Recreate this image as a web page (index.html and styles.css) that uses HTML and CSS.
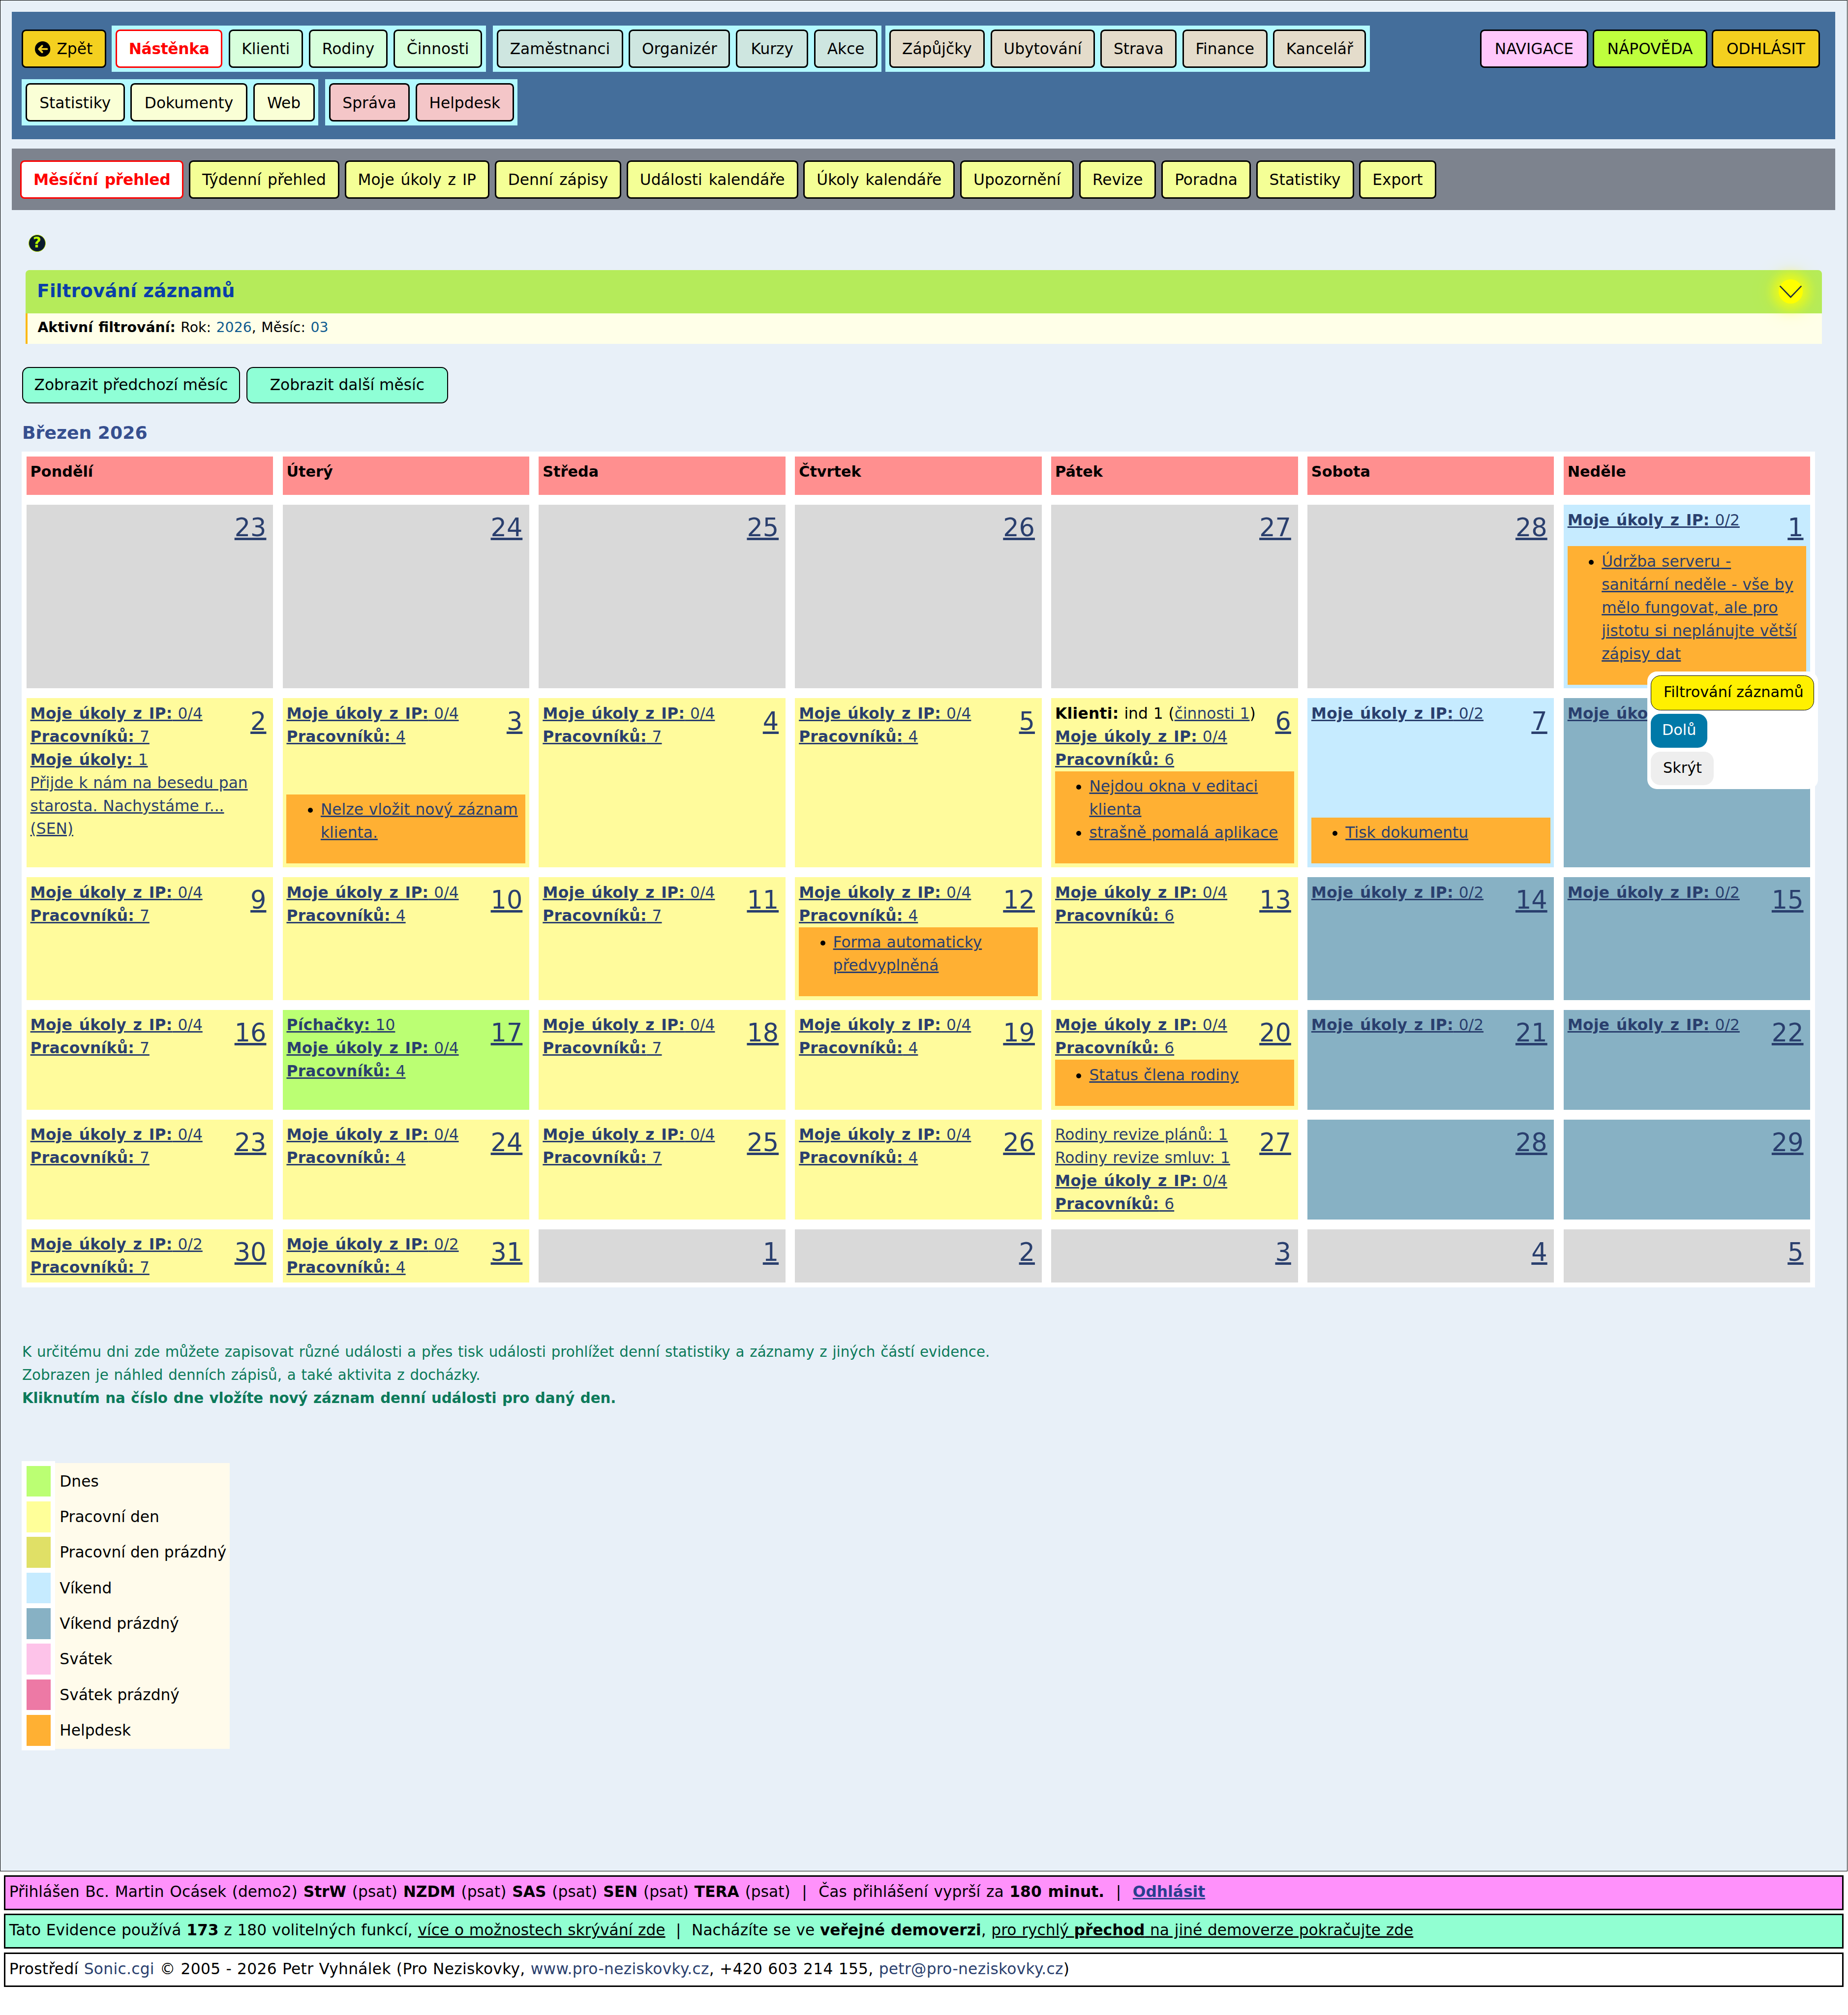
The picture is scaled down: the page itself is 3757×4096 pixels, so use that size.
FILE: index.html
```html
<!DOCTYPE html>
<html lang="cs">
<head>
<meta charset="utf-8">
<title>Měsíční přehled</title>
<link rel="stylesheet" href="styles.css">
</head>
<body>
<div class="frame">
  <nav class="nav">
    <div class="nav-left">
      <div class="nav-row">
        <a class="btn b-gold btn-back"><svg class="back-ico" viewBox="0 0 32 32"><circle cx="16" cy="16" r="16" fill="#000"/><path d="M25 16H9M15 9.5 8.5 16l6.5 6.5" fill="none" stroke="#f4d01f" stroke-width="4" stroke-linecap="round" stroke-linejoin="round"/></svg>Zpět</a>
        <div class="group g-a">
          <a class="btn active">Nástěnka</a><a class="btn b-mint">Klienti</a><a class="btn b-mint">Rodiny</a><a class="btn b-mint">Činnosti</a>
        </div>
        <div class="group g-b">
          <a class="btn b-teal">Zaměstnanci</a><a class="btn b-teal">Organizér</a><a class="btn b-teal b-wide">Kurzy</a><a class="btn b-teal">Akce</a>
        </div>
        <div class="group g-c">
          <a class="btn b-sand">Zápůjčky</a><a class="btn b-sand">Ubytování</a><a class="btn b-sand">Strava</a><a class="btn b-sand">Finance</a><a class="btn b-sand">Kancelář</a>
        </div>
      </div>
      <div class="nav-row">
        <div class="group g-d">
          <a class="btn b-cream">Statistiky</a><a class="btn b-cream">Dokumenty</a><a class="btn b-cream">Web</a>
        </div>
        <div class="group g-e">
          <a class="btn b-rose">Správa</a><a class="btn b-rose">Helpdesk</a>
        </div>
      </div>
    </div>
    <div class="nav-right">
      <a class="btn b-pink">NAVIGACE</a><a class="btn b-lime">NÁPOVĚDA</a><a class="btn b-gold">ODHLÁSIT</a>
    </div>
  </nav>

  <nav class="subnav">
    <a class="btn active">Měsíční přehled</a><a class="btn b-yel">Týdenní přehled</a><a class="btn b-yel">Moje úkoly z IP</a><a class="btn b-yel">Denní zápisy</a><a class="btn b-yel">Události kalendáře</a><a class="btn b-yel">Úkoly kalendáře</a><a class="btn b-yel">Upozornění</a><a class="btn b-yel">Revize</a><a class="btn b-yel">Poradna</a><a class="btn b-yel">Statistiky</a><a class="btn b-yel">Export</a>
  </nav>

  <div class="help-ico">?</div>

  <section class="filter">
    <div class="filter-head">
      <h2 class="filter-title">Filtrování záznamů</h2>
      <span class="chev"><svg viewBox="0 0 56 32" class="chev-svg"><path d="M3 3 28 29 53 3" fill="none" stroke="#1f2d3d" stroke-width="3"/></svg></span>
    </div>
    <div class="filter-body"><b>Aktivní filtrování:</b> Rok: <a class="flink">2026</a>, Měsíc: <a class="flink">03</a></div>
  </section>

  <div class="months">
    <a class="mbtn">Zobrazit předchozí měsíc</a><a class="mbtn mbtn-wide">Zobrazit další měsíc</a>
  </div>

  <h1 class="title">Březen 2026</h1>

  <div class="cal">
    <div class="hd">Pondělí</div><div class="hd">Úterý</div><div class="hd">Středa</div><div class="hd">Čtvrtek</div><div class="hd">Pátek</div><div class="hd">Sobota</div><div class="hd">Neděle</div>

    <div class="cell grey"><div class="txt"><a class="num">23</a></div></div>
    <div class="cell grey"><div class="txt"><a class="num">24</a></div></div>
    <div class="cell grey"><div class="txt"><a class="num">25</a></div></div>
    <div class="cell grey"><div class="txt"><a class="num">26</a></div></div>
    <div class="cell grey"><div class="txt"><a class="num">27</a></div></div>
    <div class="cell grey"><div class="txt"><a class="num">28</a></div></div>
    <div class="cell wkd"><div class="txt"><a class="num">1</a><a class="ln"><b>Moje úkoly z IP:</b> 0/2</a></div>
      <ul class="hlp"><li><a>Údržba serveru - sanitární neděle - vše by mělo fungovat, ale pro jistotu si neplánujte větší zápisy dat</a></li></ul></div>

    <div class="cell work"><div class="txt"><a class="num">2</a><a class="ln"><b>Moje úkoly z IP:</b> 0/4</a><a class="ln"><b>Pracovníků:</b> 7</a><a class="ln"><b>Moje úkoly:</b> 1</a><a class="ln">Přijde k nám na besedu pan</a><a class="ln">starosta. Nachystáme r...</a><a class="ln">(SEN)</a></div></div>
    <div class="cell work"><div class="txt"><a class="num">3</a><a class="ln"><b>Moje úkoly z IP:</b> 0/4</a><a class="ln"><b>Pracovníků:</b> 4</a></div>
      <ul class="hlp"><li><a>Nelze vložit nový záznam klienta.</a></li></ul></div>
    <div class="cell work"><div class="txt"><a class="num">4</a><a class="ln"><b>Moje úkoly z IP:</b> 0/4</a><a class="ln"><b>Pracovníků:</b> 7</a></div></div>
    <div class="cell work"><div class="txt"><a class="num">5</a><a class="ln"><b>Moje úkoly z IP:</b> 0/4</a><a class="ln"><b>Pracovníků:</b> 4</a></div></div>
    <div class="cell work"><div class="txt"><a class="num">6</a><span class="ln plain"><b>Klienti:</b> ind 1 (<a>činnosti 1</a>)</span><a class="ln"><b>Moje úkoly z IP:</b> 0/4</a><a class="ln"><b>Pracovníků:</b> 6</a></div>
      <ul class="hlp"><li><a>Nejdou okna v editaci klienta</a></li><li><a>strašně pomalá aplikace</a></li></ul></div>
    <div class="cell wkd"><div class="txt"><a class="num">7</a><a class="ln"><b>Moje úkoly z IP:</b> 0/2</a></div>
      <ul class="hlp"><li><a>Tisk dokumentu</a></li></ul></div>
    <div class="cell wke"><div class="txt"><a class="num">8</a><a class="ln"><b>Moje úkoly z IP:</b> 0/2</a></div></div>

    <div class="cell work"><div class="txt"><a class="num">9</a><a class="ln"><b>Moje úkoly z IP:</b> 0/4</a><a class="ln"><b>Pracovníků:</b> 7</a></div></div>
    <div class="cell work"><div class="txt"><a class="num">10</a><a class="ln"><b>Moje úkoly z IP:</b> 0/4</a><a class="ln"><b>Pracovníků:</b> 4</a></div></div>
    <div class="cell work"><div class="txt"><a class="num">11</a><a class="ln"><b>Moje úkoly z IP:</b> 0/4</a><a class="ln"><b>Pracovníků:</b> 7</a></div></div>
    <div class="cell work"><div class="txt"><a class="num">12</a><a class="ln"><b>Moje úkoly z IP:</b> 0/4</a><a class="ln"><b>Pracovníků:</b> 4</a></div>
      <ul class="hlp"><li><a>Forma automaticky předvyplněná</a></li></ul></div>
    <div class="cell work"><div class="txt"><a class="num">13</a><a class="ln"><b>Moje úkoly z IP:</b> 0/4</a><a class="ln"><b>Pracovníků:</b> 6</a></div></div>
    <div class="cell wke"><div class="txt"><a class="num">14</a><a class="ln"><b>Moje úkoly z IP:</b> 0/2</a></div></div>
    <div class="cell wke"><div class="txt"><a class="num">15</a><a class="ln"><b>Moje úkoly z IP:</b> 0/2</a></div></div>

    <div class="cell work"><div class="txt"><a class="num">16</a><a class="ln"><b>Moje úkoly z IP:</b> 0/4</a><a class="ln"><b>Pracovníků:</b> 7</a></div></div>
    <div class="cell today"><div class="txt"><a class="num">17</a><a class="ln"><b>Píchačky:</b> 10</a><a class="ln"><b>Moje úkoly z IP:</b> 0/4</a><a class="ln"><b>Pracovníků:</b> 4</a></div></div>
    <div class="cell work"><div class="txt"><a class="num">18</a><a class="ln"><b>Moje úkoly z IP:</b> 0/4</a><a class="ln"><b>Pracovníků:</b> 7</a></div></div>
    <div class="cell work"><div class="txt"><a class="num">19</a><a class="ln"><b>Moje úkoly z IP:</b> 0/4</a><a class="ln"><b>Pracovníků:</b> 4</a></div></div>
    <div class="cell work"><div class="txt"><a class="num">20</a><a class="ln"><b>Moje úkoly z IP:</b> 0/4</a><a class="ln"><b>Pracovníků:</b> 6</a></div>
      <ul class="hlp"><li><a>Status člena rodiny</a></li></ul></div>
    <div class="cell wke"><div class="txt"><a class="num">21</a><a class="ln"><b>Moje úkoly z IP:</b> 0/2</a></div></div>
    <div class="cell wke"><div class="txt"><a class="num">22</a><a class="ln"><b>Moje úkoly z IP:</b> 0/2</a></div></div>

    <div class="cell work"><div class="txt"><a class="num">23</a><a class="ln"><b>Moje úkoly z IP:</b> 0/4</a><a class="ln"><b>Pracovníků:</b> 7</a></div></div>
    <div class="cell work"><div class="txt"><a class="num">24</a><a class="ln"><b>Moje úkoly z IP:</b> 0/4</a><a class="ln"><b>Pracovníků:</b> 4</a></div></div>
    <div class="cell work"><div class="txt"><a class="num">25</a><a class="ln"><b>Moje úkoly z IP:</b> 0/4</a><a class="ln"><b>Pracovníků:</b> 7</a></div></div>
    <div class="cell work"><div class="txt"><a class="num">26</a><a class="ln"><b>Moje úkoly z IP:</b> 0/4</a><a class="ln"><b>Pracovníků:</b> 4</a></div></div>
    <div class="cell work"><div class="txt"><a class="num">27</a><a class="ln">Rodiny revize plánů: 1</a><a class="ln">Rodiny revize smluv: 1</a><a class="ln"><b>Moje úkoly z IP:</b> 0/4</a><a class="ln"><b>Pracovníků:</b> 6</a></div></div>
    <div class="cell wke"><div class="txt"><a class="num">28</a></div></div>
    <div class="cell wke"><div class="txt"><a class="num">29</a></div></div>

    <div class="cell work"><div class="txt"><a class="num">30</a><a class="ln"><b>Moje úkoly z IP:</b> 0/2</a><a class="ln"><b>Pracovníků:</b> 7</a></div></div>
    <div class="cell work"><div class="txt"><a class="num">31</a><a class="ln"><b>Moje úkoly z IP:</b> 0/2</a><a class="ln"><b>Pracovníků:</b> 4</a></div></div>
    <div class="cell grey"><div class="txt"><a class="num">1</a></div></div>
    <div class="cell grey"><div class="txt"><a class="num">2</a></div></div>
    <div class="cell grey"><div class="txt"><a class="num">3</a></div></div>
    <div class="cell grey"><div class="txt"><a class="num">4</a></div></div>
    <div class="cell grey"><div class="txt"><a class="num">5</a></div></div>
  </div>

  <div class="note">
    <p>K určitému dni zde můžete zapisovat různé události a přes tisk události prohlížet denní statistiky a záznamy z jiných částí evidence.</p>
    <p>Zobrazen je náhled denních zápisů, a také aktivita z docházky.</p>
    <p><b>Kliknutím na číslo dne vložíte nový záznam denní události pro daný den.</b></p>
  </div>

  <div class="legend">
    <div class="swatches">
      <span class="sw s1"></span><span class="sw s2"></span><span class="sw s3"></span><span class="sw s4"></span><span class="sw s5"></span><span class="sw s6"></span><span class="sw s7"></span><span class="sw s8"></span>
    </div>
    <div class="labels">
      <span class="lb">Dnes</span><span class="lb">Pracovní den</span><span class="lb">Pracovní den prázdný</span><span class="lb">Víkend</span><span class="lb">Víkend prázdný</span><span class="lb">Svátek</span><span class="lb">Svátek prázdný</span><span class="lb">Helpdesk</span>
    </div>
  </div>
</div>

<footer class="foot">
  <div class="bar bar-pink">Přihlášen Bc. Martin Ocásek (demo2) <b>StrW</b> (psat) <b>NZDM</b> (psat) <b>SAS</b> (psat) <b>SEN</b> (psat) <b>TERA</b> (psat) &nbsp;|&nbsp; Čas přihlášení vyprší za <b>180 minut.</b> &nbsp;|&nbsp; <a class="navy"><b>Odhlásit</b></a></div>
  <div class="bar bar-mint">Tato Evidence používá <b>173</b> z 180 volitelných funkcí, <a class="ul">více o možnostech skrývání zde</a> &nbsp;|&nbsp; Nacházíte se ve <b>veřejné demoverzi</b>, <a class="ul">pro rychlý <b>přechod</b> na jiné demoverze pokračujte zde</a></div>
  <div class="bar bar-white">Prostředí <a class="navy-plain">Sonic.cgi</a> © 2005 - 2026 Petr Vyhnálek (Pro Neziskovky, <a class="navy-plain">www.pro-neziskovky.cz</a>, +420 603 214 155, <a class="navy-plain">petr@pro-neziskovky.cz</a>)</div>
</footer>

<div class="popup">
  <a class="pop-btn pop-main">Filtrování záznamů</a>
  <a class="pop-btn pop-down">Dolů</a>
  <a class="pop-btn pop-hide">Skrýt</a>
</div>
</body>
</html>
```
FILE: styles.css
```css
* { box-sizing: border-box; }
html { zoom: 0.978; }
body {
  margin: 0;
  background: #fff;
  font-family: "DejaVu Sans", sans-serif;
  font-size: 32px;
  line-height: 48px;
  color: #000;
  position: relative;
  overflow: hidden;
}
h1, h2, p, ul { margin: 0; padding: 0; }

.frame {
  width: 3840px;
  height: 3890px;
  border: 2px solid #000;
  background: #e8f0f8;
  padding-top: 24px;
}

/* top navigation */
.nav {
  margin: 0 24px;
  height: 264px;
  background: #446e9b;
  padding: 28px 32px 28px 20px;
  display: flex;
  justify-content: space-between;
}
.nav-left { display: flex; flex-direction: column; gap: 16px; }
.nav-row { display: flex; align-items: center; gap: 12px; }
.group {
  display: flex;
  gap: 12px;
  align-items: center;
  height: 96px;
  padding: 0 8px;
  background: #b3f9ff;
}
.g-a { gap: 13px; }
.g-b { margin-left: 3px; }
.g-c { margin-left: -4px; }
.g-e { margin-left: 2px; }
.nav-right { display: flex; gap: 9px; padding-top: 8px; }

.btn {
  display: inline-flex;
  align-items: center;
  height: 80px;
  padding: 2px 25px 0;
  border: 4px solid #000;
  border-radius: 9px;
  white-space: nowrap;
  color: #000;
}
.btn.active { background: #fff; border-color: #f00; color: #f00; font-weight: bold; letter-spacing: -.3px; }
.g-a .btn, .g-b .btn, .g-c .btn { padding: 2px 24px 0; }
.g-b .b-wide { padding: 2px 28px 0; }
.g-d .btn { padding: 2px 26px 0; }
.nav-right .btn { padding: 2px 27.5px 0; }
.btn-back { gap: 13px; }
.back-ico { width: 32px; height: 32px; }
.b-gold { background: #f4d01f; }
.b-mint { background: #d7ffdc; }
.b-teal { background: #cee6e0; }
.b-sand { background: #e4dccb; }
.b-cream { background: #faffd6; }
.b-rose { background: #f4c6c8; }
.b-pink { background: #ffc8fb; }
.b-lime { background: #bfff3d; }
.b-yel { background: #f4ff96; }

/* second navigation */
.subnav {
  margin: 20px 24px 0;
  height: 128px;
  background: #7d838e;
  padding: 24px 17px;
  display: flex;
  gap: 11px;
  word-spacing: 3px;
}
.subnav .btn { padding: 2px 24.5px 0; }

/* help icon */
.help-ico {
  width: 36px;
  height: 36px;
  margin: 51px 0 0 58px;
  border-radius: 50%;
  background: #0a1a2e;
  border: 2px solid #c6f000;
  color: #bfff00;
  font-weight: bold;
  font-size: 30px;
  line-height: 32px;
  text-align: center;
}

/* filter panel */
.filter { margin: 37px 52px 0; }
.filter-head {
  height: 90px;
  background: #b5eb5a;
  border-radius: 8px 8px 0 0;
  padding: 0 24px;
  display: flex;
  align-items: center;
  justify-content: space-between;
}
.filter-title { color: #0a3ea8; font-size: 38px; font-weight: bold; letter-spacing: .2px; }
.chev {
  width: 50px;
  height: 50px;
  margin-right: 16px;
  border-radius: 50%;
  background: #ffff00;
  box-shadow: 0 0 22px 12px #ffff00aa, 0 0 40px 22px #ffff0022;
  display: flex;
  align-items: center;
  justify-content: center;
}
.chev-svg { width: 54px; height: 30px; }
.filter-body {
  height: 64px;
  background: #ffffe8;
  border-left: 5px solid #fbb917;
  padding-left: 21px;
  font-size: 29px;
  line-height: 60px;
  word-spacing: 1.5px;
}
.flink { color: #0d5a8f; }

/* month buttons */
.months { display: flex; gap: 13px; margin: 48px 0 0 45px; }
.mbtn {
  height: 76px;
  padding: 0 23px;
  border: 2.5px solid #000;
  border-radius: 14px;
  background: #8fffd6;
  font-size: 32px;
  line-height: 70px;
  white-space: nowrap;
}
.mbtn-wide { padding: 0 47px; }

.title {
  margin: 36px 0 0 45px;
  color: #364f8f;
  font-size: 37px;
  line-height: 50px;
  font-weight: bold;
}

/* calendar */
.cal {
  margin: 14px 66px 0 44px;
  padding: 10px;
  background: #fff;
  display: grid;
  grid-template-columns: repeat(7, minmax(0, 1fr));
  grid-template-rows: 80px 382px 352px 256px 208px 208px 111px;
  gap: 20px;
}
.hd {
  background: #ff8f8f;
  padding: 8px 8px 0;
  font-weight: bold;
  font-size: 31px;
}
.cell {
  display: flex;
  flex-direction: column;
  padding: 8px 8px 8px;
  color: #2a3f6e;
  word-spacing: 1px;
  min-height: 0;
}
.cell b { letter-spacing: .27px; word-spacing: 2.5px; }
.grey { background: #d9d9d9; }
.wkd { background: #c6ebff; }
.wke { background: #87b1c4; }
.work { background: #fffb9c; }
.today { background: #bbff73; }
.txt { display: flow-root; }
.num {
  float: right;
  margin: 10px 6px 0 10px;
  font-size: 52px;
  line-height: 62px;
  color: #2a3f6e;
  text-decoration: underline;
}
.ln { display: block; text-decoration: underline; }
.ln.plain { text-decoration: none; color: #000; }
.ln.plain a { color: #2a3f6e; text-decoration: underline; }
.ln.plain b { color: #000; }
.hlp {
  margin-top: auto;
  padding: 8px 12px 40px 71px;
  background: #ffb033;
  color: #000;
}
.hlp a { color: #2a3f6e; text-decoration: underline; }

/* note */
.note { margin: 111px 0 0 45px; color: #0b7a5a; font-size: 30px; word-spacing: 1.5px; }
.note b { letter-spacing: -.11px; }

/* legend */
.legend { display: flex; align-items: center; margin: 106px 0 0 44px; }
.swatches {
  width: 70px;
  padding: 10px;
  background: #fff;
  display: flex;
  flex-direction: column;
  gap: 10px;
}
.sw { display: block; height: 64px; }
.s1 { background: #bbff73; }
.s2 { background: #ffff99; }
.s3 { background: #e0e066; }
.s4 { background: #c6ebff; }
.s5 { background: #87b1c4; }
.s6 { background: #fdc3e9; }
.s7 { background: #ed79a5; }
.s8 { background: #ffb033; }
.labels {
  width: 362px;
  padding: 6px 0 6px 9px;
  background: #fffbeb;
  display: flex;
  flex-direction: column;
  gap: 10px;
}
.lb { height: 64px; line-height: 64px; white-space: nowrap; }

/* footer */
.foot { width: 3840px; padding: 8px 8px 56px; display: flex; flex-direction: column; gap: 8px; }
.bar {
  height: 72px;
  border: 4px solid #000;
  background: #fff;
  padding-left: 8px;
  line-height: 63px;
  white-space: nowrap;
  word-spacing: .8px;
}
.bar-pink { background: #ff91fb; word-spacing: 1.9px; }
.bar-mint { background: #91ffd2; }
.bar-white { letter-spacing: .32px; }
.navy { color: #2a3f8f; text-decoration: underline; }
.navy-plain { color: #2a3f6e; }
.ul { text-decoration: underline; }

/* floating popup */
.popup {
  position: absolute;
  left: 3424px;
  top: 1396px;
  width: 355px;
  height: 244px;
  padding: 8px;
  background: #fff;
  border-radius: 20px;
  display: flex;
  flex-direction: column;
  align-items: flex-start;
  gap: 8px;
  font-size: 31px;
}
.pop-btn { display: block; height: 70px; line-height: 68px; padding: 0 25px; border-radius: 20px; white-space: nowrap; }
.pop-main { width: 339px; height: 72px; background: #fff000; border: 2px solid #000; }
.pop-down { background: #0079a8; color: #fff; padding: 0 23px; }
.pop-hide { background: #eee; }
```
